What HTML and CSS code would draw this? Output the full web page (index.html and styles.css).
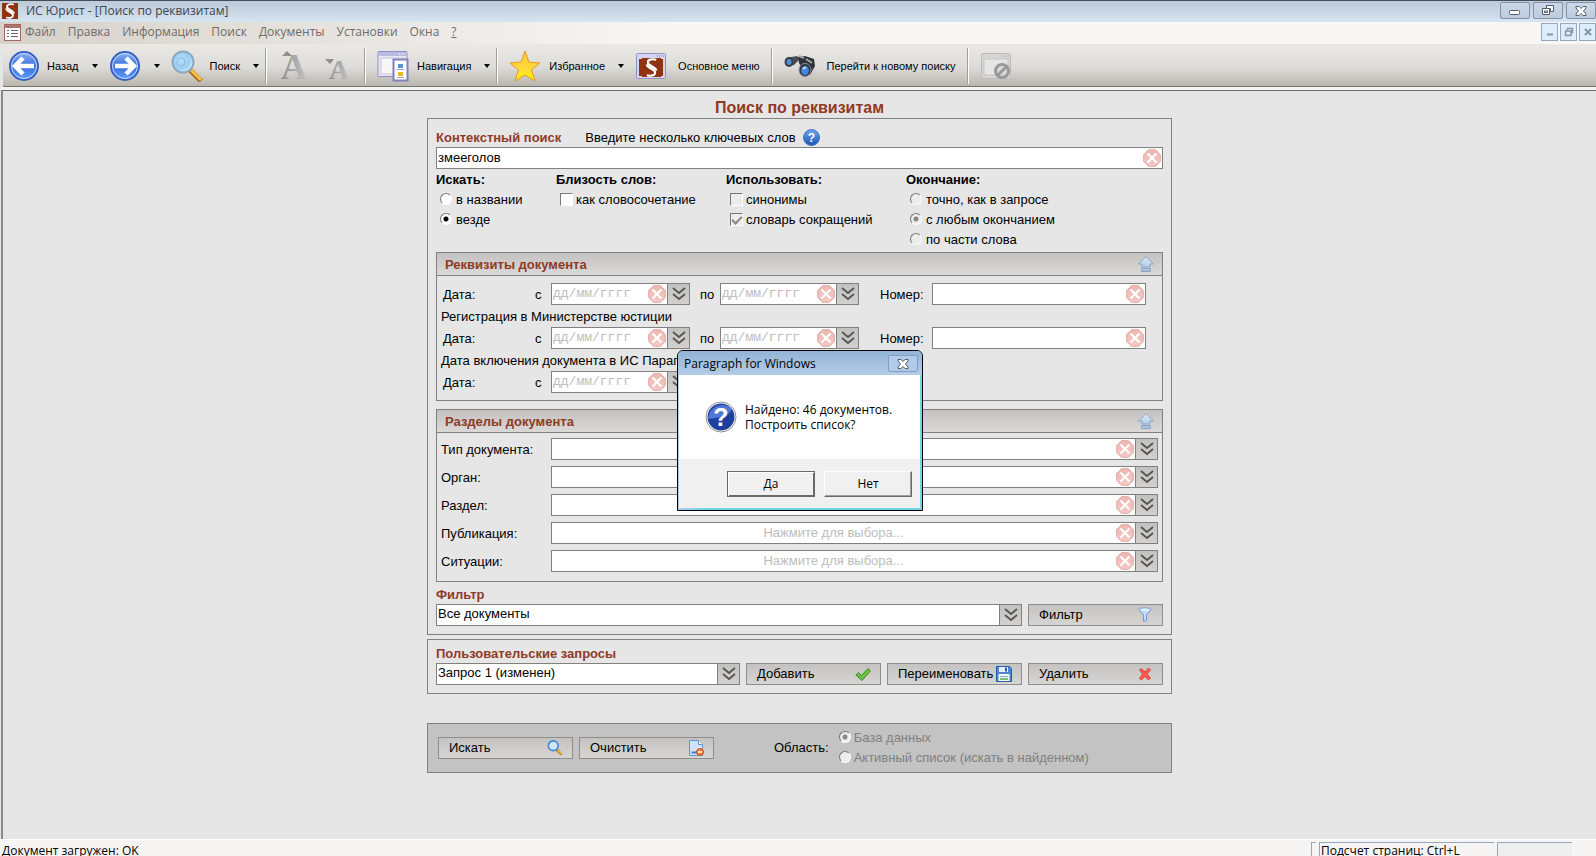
FILE: index.html
```
<!DOCTYPE html>
<html lang="ru">
<head>
  <meta charset="UTF-8">
  <meta name="viewport" content="width=device-width, initial-scale=1.0">
  <title>ИС Юрист - [Поиск по реквизитам]</title>
  <link rel="stylesheet" href="styles.css">
</head>
<body>
  <!-- Shared icons -->
  <svg class="sprite" width="0" height="0" aria-hidden="true">
    <defs>
      <linearGradient id="g-blue" x1="0" y1="0" x2="0" y2="1">
        <stop offset="0" stop-color="#8fb4f2"/><stop offset="0.5" stop-color="#3a6ee0"/><stop offset="1" stop-color="#5fa0f8"/>
      </linearGradient>
      <linearGradient id="g-help" x1="0" y1="0" x2="0" y2="1">
        <stop offset="0" stop-color="#6ea6ea"/><stop offset="1" stop-color="#1d55b4"/>
      </linearGradient>
      <radialGradient id="g-lens" cx="0.4" cy="0.4" r="0.6">
        <stop offset="0" stop-color="#b4ddf8"/><stop offset="0.7" stop-color="#9fcdf0"/><stop offset="1" stop-color="#cfe9fb"/>
      </radialGradient>
      <linearGradient id="g-star" x1="0" y1="0" x2="0" y2="1">
        <stop offset="0" stop-color="#ffc23c"/><stop offset="0.6" stop-color="#ffdc3a"/><stop offset="1" stop-color="#fff200"/>
      </linearGradient>
      <linearGradient id="g-gray" x1="0" y1="0" x2="1" y2="0">
        <stop offset="0" stop-color="#8e8e8e"/><stop offset="1" stop-color="#c4c4c4"/>
      </linearGradient>
      <linearGradient id="g-red" x1="0" y1="0" x2="0" y2="1">
        <stop offset="0" stop-color="#eeb8b2"/><stop offset="1" stop-color="#f5c9c4"/>
      </linearGradient>
      <linearGradient id="g-up" x1="0" y1="0" x2="0" y2="1">
        <stop offset="0" stop-color="#dce9f6"/><stop offset="1" stop-color="#a3bfe0"/>
      </linearGradient>
    </defs>
    <symbol id="i-clear" viewBox="0 0 18 18">
      <path d="M5.5 .7h7l4.8 4.8v7l-4.8 4.8h-7L.7 12.500v-7z" fill="url(#g-red)" stroke="#dfa9a3"/>
      <path d="M4.500 4.500l9 9M13.500 4.500l-9 9" stroke="#fff" stroke-width="2.200"/>
    </symbol>
    <symbol id="i-drop" viewBox="0 0 16 16">
      <path d="M2 2l6 5 6-5M2 8l6 5 6-5" fill="none" stroke="#555" stroke-width="1.800"/>
    </symbol>
    <symbol id="i-up" viewBox="0 0 16 16">
      <path d="M8 .5L15.500 8H12v3H4V8H.5zM3.500 12.500h9v3h-9z" fill="url(#g-up)" stroke="#8aa5c6"/>
    </symbol>
    <symbol id="i-find" viewBox="0 0 18 18">
      <path d="M11 11l5.500 5.500" stroke="#a8761c" stroke-width="3"/>
      <path d="M11.500 11l5 5" stroke="#f4bd4a" stroke-width="1.500"/>
      <circle cx="7" cy="6.500" r="5.500" fill="#cfe6fb" stroke="#3d86d8" stroke-width="1.800"/>
    </symbol>
    <symbol id="i-close" viewBox="0 0 12 10">
      <path d="M1 .5h3l2 2 2-2h3v1.500L8.500 5 11 8v1.500H8l-2-2-2 2H1V8l2.500-3L1 2z" fill="#fff" stroke="#565c6a"/>
    </symbol>
    <symbol id="i-logo" viewBox="0 0 16 16">
      <rect width="16" height="16" fill="#92330f"/>
      <path d="M12 1.500C8 .5 5 1.500 5 3.500c0 3 7 4 7 7" fill="none" stroke="#fff" stroke-width="1.800"/>
      <path d="M4 14.500c4 1 7 0 7-2 0-3-7-4-7-7" fill="none" stroke="#fff" stroke-width="1.800"/>
      <path d="M4.500 4.500l7 7" stroke="#fff" stroke-width="1.500"/>
    </symbol>
  </svg>

  <header class="titlebar">
    <svg class="app-icon"><use href="#i-logo"/></svg>
    <span class="titlebar-text">ИС Юрист - [Поиск по реквизитам]</span>
    <div class="window-buttons">
      <button type="button" aria-label="Свернуть"><svg width="12" height="10" viewBox="0 0 12 10"><rect x=".5" y="4.500" width="10" height="4" rx="1" fill="#fff" stroke="#565c6a"/></svg></button>
      <button type="button" aria-label="Восстановить"><svg width="12" height="11" viewBox="0 0 12 11"><path d="M4.500 .5h7v6h-3v-3h-4z" fill="#fff" stroke="#565c6a"/><path d="M.5 3.500h7v6h-7z" fill="#fff" stroke="#565c6a"/><path d="M2.500 6h3v1.500h-3z" fill="#fff" stroke="#565c6a"/></svg></button>
      <button type="button" aria-label="Закрыть"><svg width="12" height="10"><use href="#i-close"/></svg></button>
    </div>
  </header>

  <nav class="menubar">
    <svg class="doc-icon" viewBox="0 0 17 17"><rect x=".5" y=".5" width="16" height="16" fill="#fff" stroke="#a1695f"/><rect x="1" y="1" width="15" height="3" fill="#a8746c"/><path d="M3 6.500h2M3 9.500h2M3 12.500h2M7 6.500h7M7 9.500h7M7 12.500h7" stroke="#666"/></svg>
    <a href="#">Файл</a>
    <a href="#">Правка</a>
    <a href="#">Информация</a>
    <a href="#">Поиск</a>
    <a href="#">Документы</a>
    <a href="#">Установки</a>
    <a href="#">Окна</a>
    <a href="#" class="underlined">?</a>
    <div class="mdi-buttons">
      <button type="button" aria-label="Свернуть документ"><svg width="10" height="10"><path d="M2 7.500h6" stroke="#8296ab" stroke-width="2"/></svg></button>
      <button type="button" aria-label="Восстановить документ"><svg width="10" height="10"><path d="M3.500 3V1.500h5v4H7M1 4h6v4.500H1.500V4" fill="none" stroke="#8296ab" stroke-width="1.500"/></svg></button>
      <button type="button" aria-label="Закрыть документ"><svg width="10" height="10"><path d="M2 2l6 6M8 2L2 8" stroke="#8296ab" stroke-width="2"/></svg></button>
    </div>
  </nav>

  <div class="toolbar">
    <button type="button" class="tool">
      <svg width="32" height="32" viewBox="0 0 32 32"><circle cx="16" cy="16" r="14" fill="url(#g-blue)" stroke="#3561c4" stroke-width="2"/><circle cx="16" cy="16" r="12.500" fill="none" stroke="#c9dcfb"/><path d="M15 8l-8 8 8 8M8 16h18" fill="none" stroke="#fff" stroke-width="4.500"/></svg>
      <span class="tool-label">Назад</span><span class="caret"></span>
    </button>
    <button type="button" class="tool" aria-label="Вперед">
      <svg width="32" height="32" viewBox="0 0 32 32"><circle cx="16" cy="16" r="14" fill="url(#g-blue)" stroke="#3561c4" stroke-width="2"/><circle cx="16" cy="16" r="12.500" fill="none" stroke="#c9dcfb"/><path d="M17 8l8 8-8 8M24 16H6" fill="none" stroke="#fff" stroke-width="4.500"/></svg>
      <span class="caret"></span>
    </button>
    <button type="button" class="tool">
      <svg width="32" height="32" viewBox="0 0 32 32"><path d="M19 20l11 11" stroke="#a86c14" stroke-width="5"/><path d="M20 20l10 10" stroke="#ffc04a" stroke-width="3"/><circle cx="12" cy="12" r="10.500" fill="url(#g-lens)" stroke="#8aa9c2" stroke-width="2"/><circle cx="10" cy="12" r="4" fill="none" stroke="#86bfe8"/></svg>
      <span class="tool-label">Поиск</span><span class="caret"></span>
    </button>
    <span class="separator"></span>
    <button type="button" class="tool" aria-label="Увеличить шрифт" disabled>
      <svg class="letter" width="32" height="32" viewBox="0 0 32 32"><text x="16" y="29" font-family="Liberation Serif, serif" font-weight="bold" font-size="36" text-anchor="middle" fill="url(#g-gray)">A</text><path d="M4 6l5-5 5 5z" fill="#8e8e8e"/></svg>
    </button>
    <button type="button" class="tool" aria-label="Уменьшить шрифт" disabled>
      <svg class="letter" width="32" height="32" viewBox="0 0 32 32"><text x="18" y="29" font-family="Liberation Serif, serif" font-weight="bold" font-size="28" text-anchor="middle" fill="url(#g-gray)">A</text><path d="M4 9h9l-4 5z" fill="#8e8e8e"/></svg>
    </button>
    <span class="separator wide"></span>
    <button type="button" class="tool roomy">
      <svg width="32" height="32" viewBox="0 0 32 32"><rect x="1" y="1.500" width="29" height="25" rx="1" fill="#e8e8ee" stroke="#8d8fc4"/><rect x="1.500" y="2" width="28" height="4" fill="#b9bbe2"/><path d="M22 4h6" stroke="#fff" stroke-dasharray="1 1"/><rect x="4" y="8" width="23" height="16" fill="#f7f7f7" stroke="#c5c6e0"/><rect x="16.500" y="9.500" width="14" height="21" fill="#fff" stroke="#8082bd" stroke-width="2"/><rect x="21" y="14" width="5" height="4" fill="#4f93dc"/><rect x="21" y="22" width="5" height="4" fill="#f3b32b"/><path d="M20 19.500h7M20 27.500h7" stroke="#9fa0c8"/></svg>
      <span class="tool-label">Навигация</span><span class="caret"></span>
    </button>
    <span class="separator"></span>
    <button type="button" class="tool roomy">
      <svg width="32" height="32" viewBox="0 0 32 32"><path d="M16 1l4 11 11 1-8.500 7L26 31l-10-6-10 6 3.500-11L1 13l11-1z" fill="url(#g-star)" stroke="#e79a1c" stroke-linejoin="round"/></svg>
      <span class="tool-label">Избранное</span><span class="caret"></span>
    </button>
    <button type="button" class="tool menu-tool">
      <svg width="32" height="32" viewBox="0 0 32 32"><rect x="1.500" y="3.500" width="29" height="25" rx="1" fill="#d3d5ee" stroke="#9092c0"/><path d="M22 6h7" stroke="#777ab0" stroke-dasharray="1 1"/><rect x="4" y="9" width="24" height="17" fill="#92330f"/><svg x="7" y="8" width="19" height="19"><use href="#i-logo"/></svg></svg>
      <span class="tool-label">Основное меню</span>
    </button>
    <span class="separator wide"></span>
    <button type="button" class="tool menu-tool">
      <svg width="32" height="32" viewBox="0 0 32 32"><path d="M2 8l11-2 3 3-6 6-6 1z" fill="#4a4d54"/><path d="M14 7l7-1 9 3 1 7-5 9-8-6-3-6z" fill="#303237"/><path d="M15 6l5 2M22 9l6 4" stroke="#a3a7ae" stroke-width="2"/><ellipse cx="5" cy="12" rx="4.500" ry="5" fill="#3b3e45"/><ellipse cx="5" cy="12" rx="2.500" ry="3" fill="#4c8ed8"/><ellipse cx="21" cy="20" rx="6" ry="6.500" fill="#2e3138" stroke="#8d929b"/><ellipse cx="21" cy="20.500" rx="4" ry="4.500" fill="#3f86dc"/><path d="M19 19l3-2" stroke="#bfe0ff" stroke-width="2"/></svg>
      <span class="tool-label">Перейти к новому поиску</span>
    </button>
    <span class="separator wide"></span>
    <button type="button" class="tool" aria-label="Закрыть окно" disabled>
      <svg width="32" height="32" viewBox="0 0 32 32"><rect x="1.500" y="3.500" width="29" height="25" rx="1" fill="#d6d5d3" stroke="#bbb"/><rect x="4" y="9" width="24" height="16" fill="#e6e6e6" stroke="#c4c4c4"/><path d="M22 6h7" stroke="#aaa" stroke-dasharray="1 1"/><circle cx="22" cy="21" r="6.500" fill="#d8d8d8" stroke="#999" stroke-width="3"/><path d="M17.500 25.500l9-9" stroke="#999" stroke-width="3"/></svg>
    </button>
  </div>

  <main class="workspace">
    <form class="search-form">
      <h1>Поиск по реквизитам</h1>

      <section class="box">
        <div class="context-head">
          <h2><label for="context">Контекстный поиск</label></h2>
          <span>Введите несколько ключевых слов</span>
          <svg class="help" width="17" height="17" viewBox="0 0 17 17"><circle cx="8.500" cy="8.500" r="8" fill="url(#g-help)" stroke="#3a72bd"/><text x="8.500" y="13" font-family="Liberation Sans, sans-serif" font-weight="bold" font-size="12" text-anchor="middle" fill="#fff">?</text></svg>
        </div>
        <div class="field">
          <input type="text" id="context" value="змееголов">
          <button type="button" class="clear" aria-label="Очистить"><svg><use href="#i-clear"/></svg></button>
        </div>

        <div class="options">
          <fieldset>
            <legend>Искать:</legend>
            <label><input type="radio" name="where">в названии</label>
            <label><input type="radio" name="where" checked>везде</label>
          </fieldset>
          <fieldset>
            <legend>Близость слов:</legend>
            <label><input type="checkbox">как словосочетание</label>
          </fieldset>
          <fieldset>
            <legend>Использовать:</legend>
            <label><input type="checkbox" disabled>синонимы</label>
            <label><input type="checkbox" checked disabled>словарь сокращений</label>
          </fieldset>
          <fieldset>
            <legend>Окончание:</legend>
            <label><input type="radio" name="ending" disabled>точно, как в запросе</label>
            <label><input type="radio" name="ending" checked disabled>с любым окончанием</label>
            <label><input type="radio" name="ending" disabled>по части слова</label>
          </fieldset>
        </div>

        <section class="panel">
          <div class="panel-head">
            <h2>Реквизиты документа</h2>
            <button type="button" class="collapse" aria-label="Свернуть раздел"><svg><use href="#i-up"/></svg></button>
          </div>
          <div class="panel-body">
            <div class="date-row">
              <span class="date-label">Дата:</span>
              <label for="doc-from">с</label>
              <div class="field date">
                <input type="text" id="doc-from" placeholder="дд/мм/гггг">
                <button type="button" class="clear" aria-label="Очистить"><svg><use href="#i-clear"/></svg></button>
                <button type="button" class="drop" aria-label="Выбрать"><svg><use href="#i-drop"/></svg></button>
              </div>
              <label for="doc-to">по</label>
              <div class="field date">
                <input type="text" id="doc-to" placeholder="дд/мм/гггг">
                <button type="button" class="clear" aria-label="Очистить"><svg><use href="#i-clear"/></svg></button>
                <button type="button" class="drop" aria-label="Выбрать"><svg><use href="#i-drop"/></svg></button>
              </div>
              <label class="number-label" for="doc-number">Номер:</label>
              <div class="field">
                <input type="text" id="doc-number">
                <button type="button" class="clear" aria-label="Очистить"><svg><use href="#i-clear"/></svg></button>
              </div>
            </div>
            <p>Регистрация в Министерстве юстиции</p>
            <div class="date-row">
              <span class="date-label">Дата:</span>
              <label for="reg-from">с</label>
              <div class="field date">
                <input type="text" id="reg-from" placeholder="дд/мм/гггг">
                <button type="button" class="clear" aria-label="Очистить"><svg><use href="#i-clear"/></svg></button>
                <button type="button" class="drop" aria-label="Выбрать"><svg><use href="#i-drop"/></svg></button>
              </div>
              <label for="reg-to">по</label>
              <div class="field date">
                <input type="text" id="reg-to" placeholder="дд/мм/гггг">
                <button type="button" class="clear" aria-label="Очистить"><svg><use href="#i-clear"/></svg></button>
                <button type="button" class="drop" aria-label="Выбрать"><svg><use href="#i-drop"/></svg></button>
              </div>
              <label class="number-label" for="reg-number">Номер:</label>
              <div class="field">
                <input type="text" id="reg-number">
                <button type="button" class="clear" aria-label="Очистить"><svg><use href="#i-clear"/></svg></button>
              </div>
            </div>
            <p>Дата включения документа в ИС Параг</p>
            <div class="date-row">
              <span class="date-label">Дата:</span>
              <label for="inc-from">с</label>
              <div class="field date">
                <input type="text" id="inc-from" placeholder="дд/мм/гггг">
                <button type="button" class="clear" aria-label="Очистить"><svg><use href="#i-clear"/></svg></button>
                <button type="button" class="drop" aria-label="Выбрать"><svg><use href="#i-drop"/></svg></button>
              </div>
            </div>
          </div>
        </section>

        <section class="panel">
          <div class="panel-head">
            <h2>Разделы документа</h2>
            <button type="button" class="collapse" aria-label="Свернуть раздел"><svg><use href="#i-up"/></svg></button>
          </div>
          <div class="panel-body sections">
            <label for="type">Тип документа:</label>
            <div class="field">
              <input type="text" id="type">
              <button type="button" class="clear" aria-label="Очистить"><svg><use href="#i-clear"/></svg></button>
              <button type="button" class="drop" aria-label="Выбрать"><svg><use href="#i-drop"/></svg></button>
            </div>
            <label for="organ">Орган:</label>
            <div class="field">
              <input type="text" id="organ">
              <button type="button" class="clear" aria-label="Очистить"><svg><use href="#i-clear"/></svg></button>
              <button type="button" class="drop" aria-label="Выбрать"><svg><use href="#i-drop"/></svg></button>
            </div>
            <label for="part">Раздел:</label>
            <div class="field">
              <input type="text" id="part">
              <button type="button" class="clear" aria-label="Очистить"><svg><use href="#i-clear"/></svg></button>
              <button type="button" class="drop" aria-label="Выбрать"><svg><use href="#i-drop"/></svg></button>
            </div>
            <label for="publication">Публикация:</label>
            <div class="field">
              <input type="text" id="publication" placeholder="Нажмите для выбора...">
              <button type="button" class="clear" aria-label="Очистить"><svg><use href="#i-clear"/></svg></button>
              <button type="button" class="drop" aria-label="Выбрать"><svg><use href="#i-drop"/></svg></button>
            </div>
            <label for="situation">Ситуации:</label>
            <div class="field">
              <input type="text" id="situation" placeholder="Нажмите для выбора...">
              <button type="button" class="clear" aria-label="Очистить"><svg><use href="#i-clear"/></svg></button>
              <button type="button" class="drop" aria-label="Выбрать"><svg><use href="#i-drop"/></svg></button>
            </div>
          </div>
        </section>

        <h2><label for="filter">Фильтр</label></h2>
        <div class="button-row">
          <div class="combo">
            <select id="filter"><option>Все документы</option></select>
            <span class="drop"><svg><use href="#i-drop"/></svg></span>
          </div>
          <button type="button" class="action">Фильтр
            <svg viewBox="0 0 16 16"><path d="M2 2.500c0-2 12-2 12 0L9.500 8v5.500l-3 1V8z" fill="#c3dcf8" stroke="#6b9ad8"/><ellipse cx="8" cy="2.500" rx="5" ry="1" fill="#eaf4ff"/></svg>
          </button>
        </div>
      </section>

      <section class="box queries">
        <h2><label for="query">Пользовательские запросы</label></h2>
        <div class="button-row">
          <div class="combo">
            <select id="query"><option>Запрос 1 (изменен)</option></select>
            <span class="drop"><svg><use href="#i-drop"/></svg></span>
          </div>
          <button type="button" class="action">Добавить
            <svg viewBox="0 0 16 16"><path d="M.8 9L3.500 6.500l3 3L13 2.500 15.300 5 7 14.500z" fill="#6cc043" stroke="#3d8a24"/></svg>
          </button>
          <button type="button" class="action">Переименовать
            <svg viewBox="0 0 16 16"><path d="M.5 .5h13l2 2v13H.5z" fill="#4f86cf" stroke="#2c5ba0"/><rect x="3" y="1" width="9" height="5" fill="#e8f0fa"/><rect x="9" y="1.500" width="2" height="4" fill="#2c5ba0"/><rect x="2.500" y="8" width="11" height="7" fill="#f4f8ee"/><path d="M4 10.500h8" stroke="#8aa8cc"/><path d="M4 13h8" stroke="#7cc06a" stroke-width="2"/></svg>
          </button>
          <button type="button" class="action">Удалить
            <svg viewBox="0 0 16 16"><path d="M4 2.500L8 6l3.500-4L13.500 4l-3.500 4 3.500 4-2 2L8 10.500 4.500 14 2.500 12.500 5.500 8l-3-4z" fill="#ff5a50" stroke="#e0453d"/></svg>
          </button>
        </div>
      </section>

      <section class="box actions">
        <button type="submit" class="action">Искать
          <svg><use href="#i-find"/></svg>
        </button>
        <button type="reset" class="action">Очистить
          <svg viewBox="0 0 16 16"><path d="M1.500 .5h9l4 4v11h-13z" fill="#cfe3fa" stroke="#5f95d4"/><path d="M10.500 .5v4h4" fill="#fff" stroke="#5f95d4"/><path d="M3.500 12.500h5" stroke="#3f80d0" stroke-width="2"/><circle cx="12" cy="12" r="3.500" fill="#f07c35" stroke="#c4541a"/><path d="M10 12h4" stroke="#fff" stroke-width="1.500"/></svg>
        </button>
        <span class="area-label">Область:</span>
        <div class="area">
          <label><input type="radio" name="area" checked disabled>База данных</label>
          <label><input type="radio" name="area" disabled>Активный список (искать в найденном)</label>
        </div>
      </section>
    </form>
  </main>

  <footer class="statusbar">
    <span class="status-text">Документ загружен: OK</span>
    <span class="status-cell tiny"></span>
    <span class="status-cell pages">Подсчет страниц: Ctrl+L</span>
    <span class="status-cell empty"></span>
  </footer>

  <div class="dialog" role="dialog" aria-labelledby="dialog-title">
    <div class="dialog-head">
      <span id="dialog-title">Paragraph for Windows</span>
      <button type="button" class="dialog-close" aria-label="Закрыть"><svg width="12" height="10"><use href="#i-close"/></svg></button>
    </div>
    <div class="dialog-body">
      <svg width="32" height="32" viewBox="0 0 32 32"><circle cx="16" cy="16" r="15" fill="#fff" stroke="#909090"/><circle cx="16" cy="16" r="13.500" fill="#1e3f9e"/><path d="M3 18C4 6 16 0 26 7 28 12 20 16 3 18z" fill="#5c86dd" opacity=".8"/><text x="16" y="25" font-family="Liberation Sans, sans-serif" font-weight="bold" font-size="25" text-anchor="middle" fill="#fff">?</text></svg>
      <p>Найдено: 46 документов.<br>Построить список?</p>
    </div>
    <div class="dialog-foot">
      <button type="button" class="default">Да</button>
      <button type="button">Нет</button>
    </div>
  </div>
</body>
</html>
```
FILE: styles.css
```
* {
  margin: 0;
  padding: 0;
  box-sizing: border-box;
}

body {
  font-family: "Liberation Sans", Arial, sans-serif;
  font-size: 13px;
  line-height: 16px;
  color: #000;
  background: #e6e6e6;
  min-height: 100vh;
  display: flex;
  flex-direction: column;
  overflow: hidden;
}

button,
input,
select {
  font: inherit;
  color: inherit;
}

svg {
  display: block;
  flex: none;
}

.sprite {
  position: absolute;
}

/* Window frame */
.titlebar {
  display: flex;
  align-items: center;
  height: 22px;
  padding: 0 0 2px 2px;
  border-top: 1px solid #474b57;
  background: linear-gradient(#bccad9, #d7e4f1);
  font-family: "Open Sans", "Segoe UI", sans-serif;
  font-size: 12px;
  color: #3c4450;
}

.app-icon {
  width: 16px;
  height: 16px;
}

.titlebar-text {
  flex: 1;
  margin-left: 8px;
}

.window-buttons {
  display: flex;
  gap: 3px;
}

.window-buttons button {
  width: 30px;
  height: 17px;
  display: flex;
  align-items: center;
  justify-content: center;
  border: 1px solid #8092ac;
  border-radius: 2px;
  background: linear-gradient(#cbd8e6, #bdcbdc);
}

.menubar {
  display: flex;
  align-items: center;
  gap: 12px;
  height: 22px;
  padding: 0 0 2px 4px;
  background: linear-gradient(to right, #d6d1c9, #f8f7f6 42%);
  font-family: "Open Sans", "Segoe UI", sans-serif;
  font-size: 12px;
}

.menubar a {
  color: #6f6c68;
  text-decoration: none;
}

.menubar a.underlined {
  text-decoration: underline;
}

.doc-icon {
  width: 17px;
  height: 17px;
  margin-right: -8px;
}

.mdi-buttons {
  display: flex;
  gap: 2px;
  margin-left: auto;
}

.mdi-buttons button {
  width: 17px;
  height: 18px;
  display: flex;
  align-items: center;
  justify-content: center;
  border: 1px solid #94a9bf;
  background: #dfedfb;
}

.toolbar {
  display: flex;
  align-items: center;
  height: 43px;
  margin-left: 3px;
  padding-top: 2px;
  border-bottom: 1px solid #77766d;
  background: linear-gradient(#ebe9e6, #dedcd8 55%, #b9b6af);
  font-size: 11px;
}

.tool {
  display: flex;
  align-items: center;
  height: 36px;
  padding: 0 6px 0 5px;
  border: none;
  background: none;
}

.letter {
  overflow: visible;
}

.tool-label {
  margin-left: 7px;
}

.roomy .tool-label {
  margin-left: 8px;
}

.menu-tool .tool-label {
  margin-left: 11px;
}

.caret {
  margin-left: 13px;
  border: 3px solid transparent;
  border-top: 4px solid #000;
  border-bottom: none;
}

.separator {
  width: 2px;
  height: 36px;
  margin-right: 6px;
  border-left: 1px solid #a09d96;
  border-right: 1px solid #fff;
}

.separator.wide {
  margin-left: 5px;
}

/* Work area */
.workspace {
  flex: 1;
  margin: 3px 0 0 1px;
  border-top: 1px solid #6b6b6b;
  border-left: 2px solid #8a8a8a;
  box-shadow: 0 -3px 0 #f4f4f2;
}

.search-form {
  width: 745px;
  max-width: 100%;
  margin: 0 auto;
  padding-top: 7px;
}

h1 {
  font-size: 16px;
  line-height: 20px;
  text-align: center;
  color: #8f3a1e;
}

h2 {
  font-size: 13px;
  line-height: 19px;
  color: #8f3a26;
}

.box {
  padding: 9px 8px 8px;
  border: 1px solid #808080;
}

.queries {
  margin-top: 4px;
  padding-top: 4px;
}

.context-head {
  display: flex;
  align-items: center;
}

.context-head span {
  margin: 0 7px 0 24px;
}

.field {
  display: flex;
  flex: 1;
  min-width: 0;
  height: 22px;
  border: 1px solid #808080;
  background: #fff;
}

.field input {
  flex: 1;
  min-width: 0;
  padding: 0 1px;
  border: none;
  outline: none;
  background: none;
}

.field input::placeholder {
  color: #bdbdbd;
}

.clear {
  width: 20px;
  display: flex;
  align-items: center;
  justify-content: center;
  border: none;
  background: none;
}

.clear svg {
  width: 18px;
  height: 18px;
}

.drop {
  width: 22px;
  display: flex;
  align-items: center;
  justify-content: center;
  border: none;
  border-left: 1px solid #808080;
  background: linear-gradient(#c2c2c0, #d2d1cf);
}

.drop svg {
  width: 16px;
  height: 16px;
}

/* Search options */
.options {
  display: grid;
  grid-template-columns: 120px 170px 180px 1fr;
  height: 83px;
  padding-top: 1px;
}

fieldset {
  border: none;
}

legend {
  font-weight: bold;
  line-height: 20px;
}

fieldset label,
.area label {
  display: flex;
  align-items: center;
  height: 20px;
}

input[type="radio"],
input[type="checkbox"] {
  appearance: none;
  flex: none;
  width: 12px;
  height: 12px;
  margin: 0 4px 2px;
  background: #fff;
  border: 1px solid;
  border-color: #777 #fff #fff #777;
}

input[type="radio"] {
  border-radius: 50%;
}

input[type="checkbox"] {
  width: 13px;
  height: 13px;
  margin-right: 3px;
}

input[type="radio"]:disabled,
input[type="checkbox"]:disabled {
  background: #ececec;
}

input[type="radio"]:checked {
  background: radial-gradient(circle, #000 2px, #fff 3px);
}

input[type="radio"]:checked:disabled {
  background: radial-gradient(circle, #888 2px, #ececec 3px);
}

input[type="checkbox"]:checked::before {
  content: "";
  display: block;
  width: 4px;
  height: 8px;
  margin: 0 auto;
  border: solid #888;
  border-width: 0 2px 2px 0;
  transform: rotate(45deg);
}

/* Panels */
.panel {
  margin-bottom: 8px;
  border: 1px solid #808080;
}

.panel + .panel {
  margin-bottom: 3px;
}

.panel-head {
  display: flex;
  align-items: center;
  justify-content: space-between;
  height: 23px;
  padding: 0 8px;
  border-bottom: 1px solid #808080;
  background: linear-gradient(#c3c2c0, #dad9d7);
}

.collapse {
  border: none;
  background: none;
}

.collapse svg {
  width: 16px;
  height: 16px;
}

.panel-body {
  padding: 7px 16px 7px 4px;
}

.panel-body p {
  padding-top: 1px;
  line-height: 21px;
}

.panel-body label,
.date-label {
  padding-top: 2px;
}

.date-row {
  display: flex;
  align-items: center;
}

.date-label {
  width: 94px;
  padding-left: 2px;
}

.date-row label {
  width: 16px;
}

.date-row .date {
  flex: none;
  width: 139px;
}

.date-row .date + label {
  width: 30px;
  padding-left: 10px;
}

.date-row .date + .number-label {
  width: 73px;
  padding-left: 21px;
}

.date input {
  font-family: "Liberation Mono", "Courier New", monospace;
}

.sections {
  display: grid;
  grid-template-columns: 110px 1fr;
  row-gap: 6px;
  align-items: center;
  padding: 5px 4px 9px;
}

.sections input {
  text-align: center;
}

/* Combos and buttons */
.button-row {
  display: flex;
  gap: 6px;
}

.combo {
  position: relative;
  flex: 1;
  height: 22px;
}

.combo select {
  appearance: none;
  width: 100%;
  height: 100%;
  padding: 0 24px 2px 1px;
  border: 1px solid #808080;
  border-radius: 0;
  background: #fff;
}

.combo .drop {
  position: absolute;
  top: 1px;
  right: 1px;
  bottom: 1px;
  pointer-events: none;
}

.action {
  width: 135px;
  height: 22px;
  display: flex;
  align-items: center;
  justify-content: space-between;
  padding: 0 9px 0 10px;
  border: 1px solid #8e8e8e;
  background: linear-gradient(#c4c3c1, #d6d5d3);
}

.action svg {
  width: 16px;
  height: 16px;
}

.actions {
  display: flex;
  align-items: center;
  gap: 6px;
  margin-top: 29px;
  padding: 4px 10px;
  background: #c3c3c3;
}

.area-label {
  margin-left: 54px;
}

.area {
  color: #808080;
}

.area label {
  line-height: 20px;
}

.area input[type="radio"] {
  margin-right: 3px;
}

/* Status bar */
.statusbar {
  display: flex;
  height: 17px;
  padding: 2px 24px 0 2px;
  gap: 3px;
  border-top: 1px solid #fff;
  overflow: hidden;
  background: #f6f5f4;
  font-family: "Open Sans", "Segoe UI", sans-serif;
  font-size: 12px;
}

.status-text {
  flex: 1;
  padding-top: 1px;
}

.status-cell {
  height: 20px;
  padding-left: 1px;
  border-top: 1px solid #93a9c0;
  border-left: 1px solid #93a9c0;
}

.tiny {
  width: 5px;
}

.pages {
  width: 175px;
}

.empty {
  width: 75px;
  background: #eeeeee;
}

/* Message box */
.dialog {
  position: absolute;
  top: 350px;
  left: 677px;
  width: 246px;
  border: 1px solid #000;
  border-radius: 6px 6px 0 0;
  background: linear-gradient(to right, #b4cde8, #6fd6ea 10%);
  overflow: hidden;
  font-family: "Open Sans", "Segoe UI", sans-serif;
  font-size: 12px;
}

.dialog-head {
  display: flex;
  align-items: center;
  justify-content: space-between;
  height: 24px;
  padding: 1px 4px 0 6px;
  background: linear-gradient(#93b4d6, #b4cde8);
}

.dialog-close {
  width: 30px;
  height: 17px;
  display: flex;
  align-items: center;
  justify-content: center;
  border: 1px solid #7f9fc4;
  border-radius: 2px;
  background: #b3cbe8;
}

.dialog-body {
  display: flex;
  align-items: center;
  gap: 8px;
  height: 84px;
  margin: 0 2px 0 1px;
  padding-left: 26px;
  background: #fff;
}

.dialog-body p {
  line-height: 15px;
}

.dialog-foot {
  display: flex;
  justify-content: flex-end;
  gap: 9px;
  height: 49px;
  margin: 0 2px 2px 1px;
  padding: 12px 8px 11px;
  background: #f0f0f0;
}

.dialog-foot button {
  width: 88px;
  border: 1px solid;
  border-color: #fff #696969 #696969 #fff;
  background: #f0f0f0;
  box-shadow: inset -1px -1px 0 #a0a0a0;
}

.dialog-foot .default {
  border-color: #696969;
  box-shadow: inset 1px 1px 0 #fff, inset -1px -1px 0 #696969;
}
```
